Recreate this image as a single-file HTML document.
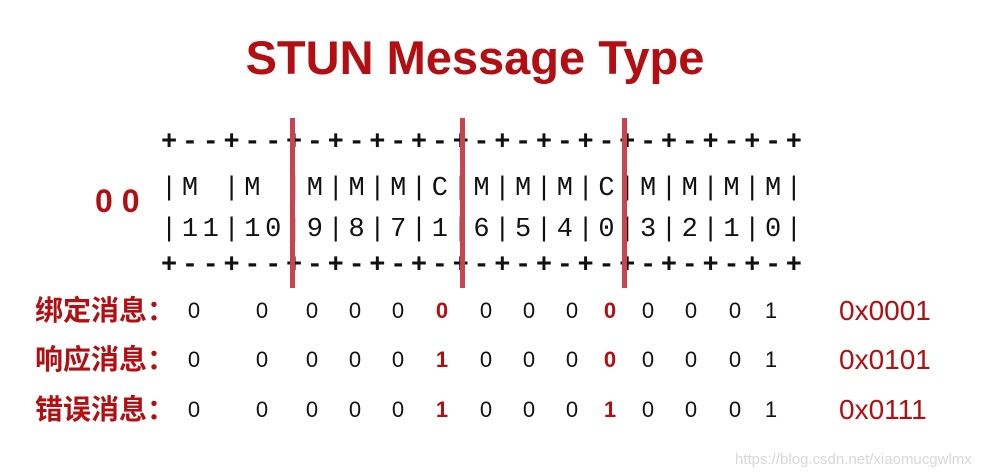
<!DOCTYPE html>
<html><head><meta charset="utf-8"><style>
html,body{margin:0;padding:0;background:#fff;width:995px;height:474px;overflow:hidden}
</style></head><body>
<svg width="995" height="474" xmlns="http://www.w3.org/2000/svg">
<text x="475" y="74" text-anchor="middle" font-family="Liberation Sans, sans-serif" font-weight="bold" font-size="47" fill="#b30f12">STUN Message Type</text>
<g font-family="Liberation Mono, monospace" font-size="27" fill="#111" font-weight="bold">
<text x="161" y="149" textLength="641" lengthAdjust="spacing">+--+--+-+-+-+-+-+-+-+-+-+-+-+-+</text>
<text x="161" y="195" textLength="641" lengthAdjust="spacing" font-weight="normal">|M |M |M|M|M|C|M|M|M|C|M|M|M|M|</text>
<text x="161" y="236" textLength="641" lengthAdjust="spacing" font-weight="normal">|11|10|9|8|7|1|6|5|4|0|3|2|1|0|</text>
<text x="161" y="272" textLength="641" lengthAdjust="spacing">+--+--+-+-+-+-+-+-+-+-+-+-+-+-+</text>
</g>
<rect x="290" y="118" width="5" height="170" fill="#c9444f"/>
<rect x="460" y="118" width="5" height="170" fill="#c9444f"/>
<rect x="622" y="118" width="5" height="170" fill="#c9444f"/>
<text x="95" y="212" font-family="Liberation Sans, sans-serif" font-weight="bold" font-size="32" fill="#b30f12">0 0</text>
<g font-family="Liberation Sans, 'Noto Sans CJK SC', sans-serif" font-weight="bold" font-size="28" fill="#b30f12">
<text x="35" y="320">绑定消息：</text>
<text x="35" y="369">响应消息：</text>
<text x="35" y="419">错误消息：</text>
</g>
<g font-family="Liberation Sans, sans-serif" font-size="22" fill="#111" text-anchor="middle">
<g transform="translate(0,318)">
<text x="194">0</text><text x="262">0</text><text x="312">0</text><text x="355">0</text><text x="398">0</text><text x="442" fill="#b30f12" font-weight="bold">0</text><text x="486">0</text><text x="529">0</text><text x="572">0</text><text x="610" fill="#b30f12" font-weight="bold">0</text><text x="648">0</text><text x="691">0</text><text x="735">0</text><text x="771">1</text>
</g>
<g transform="translate(0,367)">
<text x="194">0</text><text x="262">0</text><text x="312">0</text><text x="355">0</text><text x="398">0</text><text x="442" fill="#b30f12" font-weight="bold">1</text><text x="486">0</text><text x="529">0</text><text x="572">0</text><text x="610" fill="#b30f12" font-weight="bold">0</text><text x="648">0</text><text x="691">0</text><text x="735">0</text><text x="771">1</text>
</g>
<g transform="translate(0,417)">
<text x="194">0</text><text x="262">0</text><text x="312">0</text><text x="355">0</text><text x="398">0</text><text x="442" fill="#b30f12" font-weight="bold">1</text><text x="486">0</text><text x="529">0</text><text x="572">0</text><text x="610" fill="#b30f12" font-weight="bold">1</text><text x="648">0</text><text x="691">0</text><text x="735">0</text><text x="771">1</text>
</g>
</g>
<g font-family="Liberation Sans, sans-serif" font-size="28" fill="#b30f12">
<text x="839" y="320">0x0001</text>
<text x="839" y="369">0x0101</text>
<text x="839" y="419">0x0111</text>
</g>
<text x="735" y="464" font-family="Liberation Sans, sans-serif" font-size="15" fill="#d8d8d8">https://blog.csdn.net/xiaomucgwlmx</text>
</svg>
</body></html>
